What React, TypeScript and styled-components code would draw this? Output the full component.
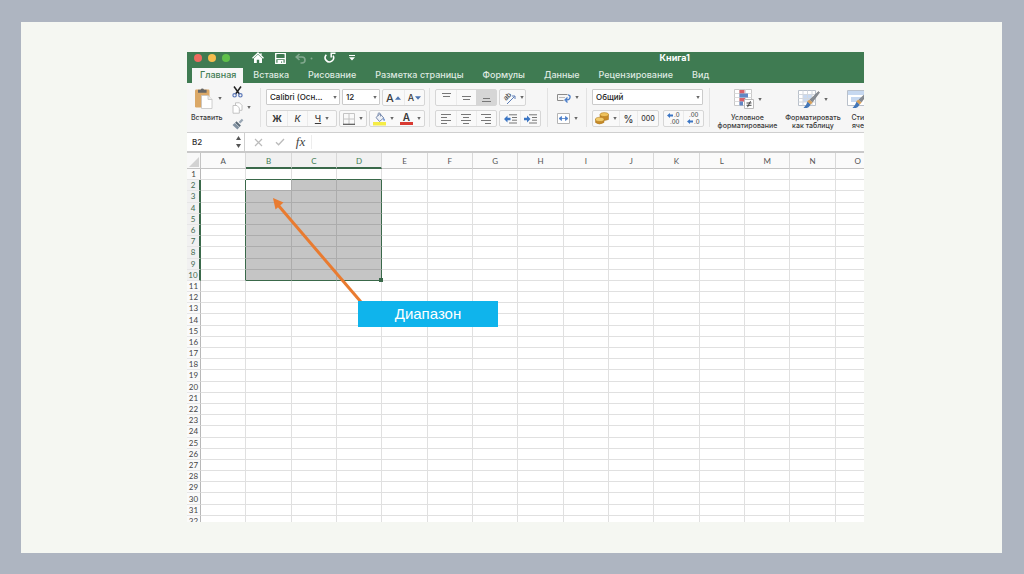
import React from "react";
import styled, { createGlobalStyle, css } from "styled-components";

const GREEN = "#3f7b52";
const OUTLINE = "#3a694a";
const UI_FONT = 'Inter, "Liberation Sans", sans-serif';

const GlobalStyle = createGlobalStyle`
  * { box-sizing: border-box; }
  body { margin: 0; font-family: ${UI_FONT}; }
  button, select, input { font-family: inherit; color: inherit; margin: 0; padding: 0; }
`;

const Page = styled.main`
  display: flex;
  height: 100vh;
  padding: 22px 22px 21px 21px;
  background: #aeb5c1;
`;

const Slide = styled.section`
  display: flex;
  flex: 1;
  min-width: 0;
  padding: 30px 138px 31px 166px;
  background: #f5f7f2;
`;

const Workbook = styled.div`
  display: flex;
  flex: 1;
  flex-direction: column;
  min-width: 0;
  overflow: hidden;
  background: #fff;
`;

const TitleBar = styled.header`
  display: flex;
  flex: none;
  align-items: center;
  height: 15px;
  padding: 0 174px 3px 7px;
  background: ${GREEN};
  color: #fff;
`;

const Lights = styled.div`
  display: flex;
  gap: 6px;
  margin-right: 17px;
`;

const Light = styled.button<{ $color: string }>`
  width: 8px;
  height: 8px;
  border: 0;
  border-radius: 50%;
  background: ${(p) => p.$color};
`;

const QuickButton = styled.button<{ $dim?: boolean; $width?: number }>`
  display: flex;
  align-items: center;
  justify-content: center;
  width: ${(p) => p.$width ?? 22}px;
  height: 12px;
  border: 0;
  background: none;
  opacity: ${(p) => (p.$dim ? 0.35 : 1)};
`;

const BookTitle = styled.h1`
  margin: 0 0 0 auto;
  font-size: 9px;
  line-height: 12px;
  font-weight: 700;
`;

const Tabs = styled.nav`
  display: flex;
  flex: none;
  gap: 1px;
  height: 16px;
  padding: 1px 5px 0;
  background: ${GREEN};
`;

const Tab = styled.a<{ $active?: boolean }>`
  padding: 0 9px;
  font-size: 9px;
  line-height: 13px;
  font-weight: 500;
  white-space: nowrap;
  text-decoration: none;
  color: #dfeae1;
  ${(p) =>
    p.$active &&
    css`
      padding: 0 7px 0 8px;
      background: #f6f6f6;
      color: ${GREEN};
    `}
`;

const Ribbon = styled.div`
  display: flex;
  flex: none;
  height: 50px;
  border-bottom: 1px solid #cfcfcf;
  background: #f6f6f6;
  color: #3a3a3a;
  overflow: hidden;
`;

const Clipboard = styled.div`
  display: flex;
  flex: none;
  width: 73px;
  padding: 2px 0 0 4px;
`;

const Group = styled.div<{ $width?: number }>`
  display: flex;
  flex: ${(p) => (p.$width ? "none" : "1 0 auto")};
  flex-direction: column;
  gap: 4px;
  width: ${(p) => (p.$width ? `${p.$width}px` : "auto")};
  padding: 6px 0 0 6px;
  background: linear-gradient(#e2e2e2, #e2e2e2) no-repeat 0 5px / 1px 39px;
`;

const Line = styled.div<{ $gap?: number }>`
  display: flex;
  gap: ${(p) => p.$gap ?? 2}px;
  height: 17px;
`;

const Cluster = styled.div<{ $plain?: boolean }>`
  display: flex;
  border: 1px solid ${(p) => (p.$plain ? "transparent" : "#d6d6d6")};
  border-radius: 2px;
  background: ${(p) => (p.$plain ? "none" : "#f9f9f9")};
`;

const Tool = styled.button<{ $width: number; $on?: boolean; $size?: number; $divided?: boolean; $tight?: boolean }>`
  display: flex;
  align-items: center;
  justify-content: center;
  gap: ${(p) => (p.$tight ? 1 : 4)}px;
  width: ${(p) => p.$width}px;
  border: 0;
  border-left: ${(p) => (p.$divided ? "1px solid #ebebeb" : "0")};
  background: ${(p) => (p.$on ? "#d6d6d6" : "none")};
  font-size: ${(p) => p.$size ?? 9}px;
  line-height: 12px;
  font-weight: 500;
`;

const Bold = styled.b`
  font-weight: 700;
`;

const SelectBox = styled.div<{ $width: number }>`
  position: relative;
  width: ${(p) => p.$width}px;
  height: 16px;
`;

const Select = styled.select`
  appearance: none;
  display: block;
  width: 100%;
  height: 100%;
  padding: 0 3px;
  border: 1px solid #cbcbcb;
  border-radius: 1px;
  background: #fff;
  color: #222;
  font-size: 8px;
  line-height: 12px;
  font-weight: 500;
`;

const SelectArrow = styled.span`
  position: absolute;
  top: 0;
  right: 3px;
  display: flex;
  align-items: center;
  height: 100%;
  pointer-events: none;
`;

const PasteButton = styled.button`
  display: flex;
  flex-direction: column;
  gap: 4px;
  width: 38px;
  padding-top: 2px;
  border: 0;
  background: none;
  font-size: 7px;
  line-height: 9px;
  font-weight: 500;
  text-align: left;
`;

const PasteFace = styled.span`
  display: flex;
  align-items: center;
  gap: 5px;
  padding-left: 3px;
`;

const ClipTools = styled.div`
  display: flex;
  flex-direction: column;
  gap: 3px;
  padding-left: 3px;
`;

const ClipButton = styled.button`
  display: flex;
  align-items: center;
  gap: 4px;
  height: 13px;
  border: 0;
  background: none;
`;

const StyleButtons = styled.div`
  display: flex;
  gap: 4px;
`;

const StyleButton = styled.button<{ $width: number }>`
  display: flex;
  flex-direction: column;
  align-items: center;
  gap: 5px;
  width: ${(p) => p.$width}px;
  border: 0;
  background: none;
  font-size: 7px;
  line-height: 8px;
  font-weight: 500;
  white-space: nowrap;
`;

const StyleFace = styled.span`
  display: flex;
  align-items: center;
  gap: 4px;
`;

const FormulaBar = styled.div`
  display: flex;
  flex: none;
  align-items: center;
  height: 20px;
  border-bottom: 2px solid #c9c9c9;
  background: #fff;
`;

const NameBox = styled.div`
  display: flex;
  align-items: center;
  width: 58px;
  height: 18px;
  padding: 0 3px 0 5px;
  border-right: 1px solid #cfcfcf;
`;

const NameInput = styled.input`
  flex: 1;
  min-width: 0;
  border: 0;
  background: none;
  font-size: 8px;
  line-height: 12px;
  font-weight: 500;
  color: #333;
`;

const BarTools = styled.div`
  display: flex;
  align-items: center;
  padding-left: 3px;
`;

const BarButton = styled.button`
  display: flex;
  align-items: center;
  justify-content: center;
  width: 21px;
  height: 16px;
  border: 0;
  background: none;
  color: #444;
  font: italic 13px/16px "Liberation Serif", serif;
`;

const FormulaInput = styled.input`
  flex: 1;
  min-width: 0;
  height: 14px;
  border: 0;
  border-left: 1px solid #ededed;
  background: none;
  font-size: 8px;
`;

const SheetArea = styled.div`
  position: relative;
  flex: 1;
  min-height: 0;
  overflow: hidden;
`;

const Sheet = styled.table`
  table-layout: fixed;
  width: calc(100% + 17px);
  height: 374px;
  border-spacing: 0;
  font-family: Lato, "Liberation Sans", sans-serif;
  font-size: 8px;
  line-height: 9px;
`;

const Corner = styled.td`
  width: 14px;
  height: 16px;
  padding: 0;
  border-right: 1px solid #c4c4c4;
  border-bottom: 1px solid #c4c4c4;
  background: #f8f8f8;

  svg { display: block; margin: 2px 0 0 2px; }
`;

const ColumnHead = styled.th<{ $picked: boolean }>`
  height: 16px;
  padding: 2px 0 0;
  border-right: 1px solid #d8d8d8;
  border-bottom: ${(p) => (p.$picked ? `2px solid ${OUTLINE}` : "1px solid #c4c4c4")};
  background: ${(p) => (p.$picked ? "#f1f1f1" : "#fafafa")};
  color: ${(p) => (p.$picked ? GREEN : "#555")};
  font-weight: 400;
`;

const RowHead = styled.th<{ $picked: boolean }>`
  padding: 1px 0 0;
  border-right: ${(p) => (p.$picked ? `2px solid ${OUTLINE}` : "1px solid #b8b8b8")};
  border-bottom: 1px solid #e6e6e6;
  background: ${(p) => (p.$picked ? "#f1f1f1" : "#fafafa")};
  color: ${(p) => (p.$picked ? "#42694f" : "#444")};
  font-weight: 400;
`;

const Cell = styled.td<{ $fill: string; $right: string; $bottom: string }>`
  position: relative;
  padding: 0;
  border-right: 1px solid ${(p) => p.$right};
  border-bottom: 1px solid ${(p) => p.$bottom};
  background: ${(p) => p.$fill};
`;

const FillHandle = styled.span`
  position: absolute;
  z-index: 1;
  right: -2px;
  bottom: -2px;
  width: 4px;
  height: 4px;
  background: ${OUTLINE};
`;

const Arrow = styled.svg`
  position: absolute;
  left: 80px;
  top: 40px;
`;

const Callout = styled.div`
  position: absolute;
  left: 171px;
  top: 148px;
  width: 140px;
  background: #0fb4ec;
  color: #fff;
  font: 15px/26px "Liberation Sans", sans-serif;
  text-align: center;
`;

const Caret = () => (
  <svg width="4" height="3" viewBox="0 0 4 3"><path d="M.3 0h3.400L2 3z" fill="#666" /></svg>
);

const HomeIcon = () => (
  <svg width="12" height="12" viewBox="0 0 12 12">
    <path d="M.5 6.2 6 1l5.5 5.2M9 1.3v2.4" fill="none" stroke="#fff" strokeWidth="1.3" />
    <path d="M2 6.2 6 2.6l4 3.6V11H7.2V7.8H4.8V11H2z" fill="#fff" />
  </svg>
);

const SaveIcon = () => (
  <svg width="11" height="11" viewBox="0 0 11 11">
    <path d="M.7.7h9.6v9.6H.7z" fill="none" stroke="#fff" strokeWidth="1.3" />
    <path d="M2.2 1h6.6v3.8H2.2z" fill={GREEN} />
    <path d="M1 5h9v1.2H1zM2.5 7h6v3.5h-1.400V8.4H6v2.1H2.500z" fill="#fff" />
  </svg>
);

const UndoIcon = () => (
  <svg width="18" height="11" viewBox="0 0 18 11">
    <path d="M4.5 1 1.2 4l3.3 3M1.5 4H7a3 3 0 0 1 0 6H5.5" fill="none" stroke="#fff" strokeWidth="1.6" />
    <circle cx="16.5" cy="5.5" r="1" fill="#fff" />
  </svg>
);

const RedoIcon = () => (
  <svg width="12" height="12" viewBox="0 0 12 12">
    <path d="M2.3 2.8a4.2 4.2 0 1 0 6.800.9" fill="none" stroke="#fff" strokeWidth="1.6" />
    <path d="M11.500 1.200H7.200v4.300" fill="none" stroke="#fff" strokeWidth="1.5" />
  </svg>
);

const MoreIcon = () => (
  <svg width="6" height="6" viewBox="0 0 6 6"><path d="M0 0h6v1H0zM0 2.2h6L3 5.6z" fill="#fff" /></svg>
);

const PasteIcon = () => (
  <svg width="19" height="22" viewBox="0 0 19 22">
    <rect x="1" y="2.5" width="14.5" height="18" rx="1.2" fill="#dba867" />
    <path d="M4 2.8h2.6a1.8 1.8 0 0 1 3.4 0h2.6v3H4z" fill="#666" />
    <path d="M7.5 8.5H14l4 4v9H7.5z" fill="#fff" stroke="#c4c4c4" strokeWidth=".8" />
    <path d="M14 8.5v4h4" fill="#eee" stroke="#c4c4c4" strokeWidth=".8" />
  </svg>
);

const CutIcon = () => (
  <svg width="11" height="12" viewBox="0 0 11 12">
    <path d="M2 .5 7.4 8M9 .5 3.6 8" stroke="#222" strokeWidth="1.5" fill="none" />
    <circle cx="2.6" cy="9.3" r="1.7" fill="none" stroke="#5c78b8" strokeWidth="1.2" />
    <circle cx="8.4" cy="9.3" r="1.7" fill="none" stroke="#5c78b8" strokeWidth="1.2" />
  </svg>
);

const CopyIcon = () => (
  <svg width="11" height="12" viewBox="0 0 11 12" fill="#fff" stroke="#bdbdbd" strokeWidth=".9">
    <path d="M3.5.8h4l2.5 2.5v5H3.5z" />
    <path d="M1 3.5h4L7.3 6v5.2H1z" />
  </svg>
);

const BrushIcon = () => (
  <svg width="12" height="12" viewBox="0 0 12 12">
    <path d="M6.6 4 9.8.7l1.6 1.5L8.3 5.6z" fill="#9aa7b4" />
    <path d="m4.5 3.3 4.4 4.3-1.3 1.3-4.5-4.2z" fill="#596875" />
    <path d="m2.8 5 4.5 4.2L5.4 11.5.5 7z" fill="#8292a2" />
  </svg>
);

const SizeArrow = ({ up }: { up?: boolean }) => (
  <svg width="6" height="4" viewBox="0 0 6 4"><path d={up ? "M0 3.800h6L3 .2z" : "M0 .2h6L3 3.800z"} fill="#4a73b0" /></svg>
);

const BordersIcon = () => (
  <svg width="12" height="12" viewBox="0 0 12 12">
    <path d="M.5.5h11v11M.5.5v11M6 .5v11M.5 6h11" fill="none" stroke="#c4c4c4" />
    <path d="M0 11.3h12" stroke="#555" strokeWidth="1.2" />
  </svg>
);

const FillIcon = () => (
  <svg width="13" height="14" viewBox="0 0 13 14">
    <path d="m3 5.5 4-3.8 3.7 4.2L6.5 9.5z" fill="#eef1f6" stroke="#6b7fa5" strokeWidth=".9" />
    <path d="M5 4V1.5Q6.5-.3 7.5 2v2.5" fill="none" stroke="#6b7fa5" strokeWidth=".8" />
    <path d="M10.5 5.5q2 2 .9 3.5-1.4 0-.9-3.5" fill="#3f6fc0" />
    <path d="M0 10h13v3.5H0z" fill="#f5ec45" />
  </svg>
);

const ColorBar = styled.span`
  display: block;
  width: 13px;
  border-bottom: 3px solid #d93a32;
  font-size: 10px;
  line-height: 10px;
  font-weight: 600;
`;

const Strokes = ({ d }: { d: string }) => (
  <svg width="11" height="11" viewBox="0 0 11 11"><path d={d} stroke="#777" strokeWidth="1" fill="none" /></svg>
);

const OrientIcon = () => (
  <svg width="14" height="14" viewBox="0 0 14 14">
    <text transform="translate(4 10) rotate(-45)" fontSize="7" fontFamily="Inter, sans-serif" fill="#444">ab</text>
    <path d="m5 13 7.500-7.500M13 5v3M13 5h-3" stroke="#5f7fb8" fill="none" />
  </svg>
);

const IndentIcon = ({ out }: { out?: boolean }) => (
  <svg width="13" height="10" viewBox="0 0 13 10">
    <path d="M5 .8h8M8 3.5h5M8 6.2h5M5 9h8" stroke="#777" />
    <path d={out ? "M0 5 3.5 1.6v2.2h3v2.4h-3v2.2z" : "M6.5 5 3 1.6v2.2H0v2.4h3v2.2z"} fill="#3c76c4" />
  </svg>
);

const WrapIcon = () => (
  <svg width="14" height="10" viewBox="0 0 14 10">
    <path d="M.5 1.5h10M.5 1.500v6h6" stroke="#8a8a8a" fill="none" />
    <path d="M2 4.5h6" stroke="#bbb" />
    <path d="M11 1.800q2.5.5 2 2.8-.5 2.400-4 2.400M10.5 4.500 8 7l2.5 2.5" stroke="#4a7dc9" strokeWidth="1.3" fill="none" />
  </svg>
);

const MergeIcon = () => (
  <svg width="13" height="11" viewBox="0 0 13 11">
    <path d="M.5.5h12v10H.5z" fill="#fff" stroke="#b4b4b4" />
    <path d="M2 5.5 4.5 3.500v4zM11 5.5 8.5 3.500v4zM4 5.5h5" fill="#4a7dc9" stroke="#4a7dc9" strokeWidth=".8" />
  </svg>
);

const CoinsIcon = () => (
  <svg width="14" height="13" viewBox="0 0 14 13" stroke="#a8741c" strokeWidth=".5">
    <path d="M5 2.5v5q4 2 8.5 0v-5z" fill="#c98b28" />
    <ellipse cx="9.3" cy="2.6" rx="4.3" ry="2" fill="#f0c35c" />
    <path d="M.5 7v3.5q3.5 3 8.5 0V7z" fill="#c98b28" />
    <ellipse cx="4.8" cy="7.4" rx="4.3" ry="2.1" fill="#f3cb6a" />
  </svg>
);

const DecimalIcon = ({ less }: { less?: boolean }) => (
  <svg width="13" height="13" viewBox="0 0 13 13" fontFamily="Inter, sans-serif" fontSize="6" fontWeight="500" fill="#555">
    <text x={less ? 2 : 7} y="5">{less ? ".00" : ".0"}</text>
    <text x={less ? 7 : 3} y="12">{less ? ".0" : ".00"}</text>
    <path d={less ? "M0 9.5 3 7v1.5h3v2H3V12z" : "M0 3.5 3 1v1.5h3v2H3V6z"} fill="#3c76c4" />
  </svg>
);

const CondIcon = () => (
  <svg width="20" height="20" viewBox="0 0 20 20">
    <path d="M.5.5h17v16H.5z" fill="#fff" stroke="#c9c9c9" />
    <path d="M.5 4.5h17M.5 8.5h17M.5 12.5h17M5.5.5v16M11.5.5v16" stroke="#dadada" fill="none" />
    <path d="M5.5 1h5v3.500h-5zM5.5 9h5.5v3.5H5.5z" fill="#d9606a" />
    <path d="M5.5 4.5H14v4H5.5zM5.5 12.5H9v4H5.5z" fill="#6287c5" />
    <path d="M10.5 10.5h9v9h-9z" fill="#fff" stroke="#bbb" />
    <path d="M12.5 14h5M12.5 16.3h5M16.5 12.2l-3 6" stroke="#444" />
  </svg>
);

const TableBrushIcon = ({ sheet }: { sheet?: boolean }) => (
  <svg width="22" height="20" viewBox="0 0 22 20">
    <path d="M.5 1.5h17v15H.5z" fill="#fff" stroke="#b9c0ca" />
    {sheet ? (
      <path d="M1 2h16v4H1zM4 8h10v5H4z" fill="#c6d8f0" />
    ) : (
      <>
        <path d="M5 5.5h9v7.500H5z" fill="#c9daf2" />
        <path d="M.5 5.5h17M.5 9.5h17M.5 13h17M5 1.5v15M9.5 1.5v15M14 1.5v15" stroke="#d3d8df" fill="none" />
      </>
    )}
    <path d="m20.5 2.5 1 1-7 9.500-2.500-2.300z" fill="#858b93" stroke="#666" strokeWidth=".5" />
    <path d="m11.300 10.500 3.300 3-2 2.300-3.500-3z" fill="#d8a15a" />
    <path d="M9.500 12.700 12.500 15.400q-1.500 4.300-7 3.600 2.500-2 4-6.300" fill="#4477b8" />
  </svg>
);

const tabs = ["Главная", "Вставка", "Рисование", "Разметка страницы", "Формулы", "Данные", "Рецензирование", "Вид"];
const columns = "ABCDEFGHIJKLMNO".split("");
const rows = Array.from({ length: 32 }, (_, i) => i + 1);
const inColumns = (c: number) => c >= 1 && c <= 3;
const inRows = (r: number) => r >= 2 && r <= 10;

function cellLook(c: number, r: number) {
  const picked = inColumns(c) && inRows(r);
  const line = picked ? "#acacac" : "#e0e0e0";
  return {
    $fill: picked && !(c === 1 && r === 2) ? "#c5c5c5" : "#fff",
    $right: inRows(r) && (c === 0 || c === 3) ? OUTLINE : line,
    $bottom: inColumns(c) && (r === 1 || r === 10) ? OUTLINE : line,
  };
}

const Dropdown = ({ label, value, width }: { label: string; value: string; width: number }) => (
  <SelectBox $width={width}>
    <Select aria-label={label} defaultValue={value}><option>{value}</option></Select>
    <SelectArrow><Caret /></SelectArrow>
  </SelectBox>
);

export default function App() {
  return (
    <Page>
      <GlobalStyle />
      <Slide>
        <Workbook>
          <TitleBar>
            <Lights>
              <Light $color="#ee6a5f" aria-label="Закрыть" />
              <Light $color="#f5bd4f" aria-label="Свернуть" />
              <Light $color="#5fc04a" aria-label="Развернуть" />
            </Lights>
            <QuickButton aria-label="Домой"><HomeIcon /></QuickButton>
            <QuickButton aria-label="Сохранить"><SaveIcon /></QuickButton>
            <QuickButton $dim $width={26} aria-label="Отменить"><UndoIcon /></QuickButton>
            <QuickButton $width={26} aria-label="Повторить"><RedoIcon /></QuickButton>
            <QuickButton $width={18} aria-label="Настроить панель"><MoreIcon /></QuickButton>
            <BookTitle>Книга1</BookTitle>
          </TitleBar>
          <Tabs>
            {tabs.map((t, i) => <Tab key={t} href="#" $active={i === 0}>{t}</Tab>)}
          </Tabs>
          <Ribbon>
            <Clipboard>
              <PasteButton>
                <PasteFace><PasteIcon /><Caret /></PasteFace>
                Вставить
              </PasteButton>
              <ClipTools>
                <ClipButton aria-label="Вырезать"><CutIcon /></ClipButton>
                <ClipButton aria-label="Копировать"><CopyIcon /><Caret /></ClipButton>
                <ClipButton aria-label="Формат по образцу"><BrushIcon /></ClipButton>
              </ClipTools>
            </Clipboard>
            <Group $width={169}>
              <Line>
                <Dropdown label="Шрифт" value="Calibri (Осн..." width={74} />
                <Dropdown label="Размер шрифта" value="12" width={38} />
                <Cluster>
                  <Tool $width={21} $size={11} $tight aria-label="Увеличить шрифт">A<SizeArrow up /></Tool>
                  <Tool $width={20} $size={9} $tight $divided aria-label="Уменьшить шрифт">A<SizeArrow /></Tool>
                </Cluster>
              </Line>
              <Line>
                <Cluster>
                  <Tool $width={20}><Bold>Ж</Bold></Tool>
                  <Tool $width={20} $divided><i>К</i></Tool>
                  <Tool $width={29} $divided><u>Ч</u><Caret /></Tool>
                </Cluster>
                <Cluster><Tool $width={26} aria-label="Границы"><BordersIcon /><Caret /></Tool></Cluster>
                <Cluster>
                  <Tool $width={27} aria-label="Цвет заливки"><FillIcon /><Caret /></Tool>
                  <Tool $width={27}><ColorBar>A</ColorBar><Caret /></Tool>
                </Cluster>
              </Line>
            </Group>
            <Group $width={118}>
              <Line>
                <Cluster>
                  <Tool $width={20} aria-label="По верхнему краю"><Strokes d="M1 1.5h9M2 4.5h7" /></Tool>
                  <Tool $width={20} $divided aria-label="Посередине"><Strokes d="M1 4.5h9M2 7.5h7" /></Tool>
                  <Tool $width={20} $on aria-label="По нижнему краю"><Strokes d="M2 6.5h7M1 9.5h9" /></Tool>
                </Cluster>
                <Cluster><Tool $width={25} aria-label="Ориентация"><OrientIcon /><Caret /></Tool></Cluster>
              </Line>
              <Line>
                <Cluster>
                  <Tool $width={20} aria-label="По левому краю"><Strokes d="M0 1.5h10M0 4.5h6M0 7.5h10M0 10.5h6" /></Tool>
                  <Tool $width={20} $divided aria-label="По центру"><Strokes d="M0 1.5h10M2 4.5h6M0 7.5h10M2 10.5h6" /></Tool>
                  <Tool $width={20} $divided aria-label="По правому краю"><Strokes d="M0 1.5h10M4 4.5h6M0 7.5h10M4 10.5h6" /></Tool>
                </Cluster>
                <Cluster>
                  <Tool $width={20} aria-label="Уменьшить отступ"><IndentIcon out /></Tool>
                  <Tool $width={20} $divided aria-label="Увеличить отступ"><IndentIcon /></Tool>
                </Cluster>
              </Line>
            </Group>
            <Group $width={39}>
              <Line><Cluster $plain><Tool $width={27} aria-label="Перенос текста"><WrapIcon /><Caret /></Tool></Cluster></Line>
              <Line><Cluster $plain><Tool $width={27} aria-label="Объединить ячейки"><MergeIcon /><Caret /></Tool></Cluster></Line>
            </Group>
            <Group $width={123}>
              <Line><Dropdown label="Числовой формат" value="Общий" width={111} /></Line>
              <Line $gap={4}>
                <Cluster>
                  <Tool $width={26} aria-label="Денежный формат"><CoinsIcon /><Caret /></Tool>
                  <Tool $width={18} $size={10} $divided>%</Tool>
                  <Tool $width={21} $size={7} $divided>000</Tool>
                </Cluster>
                <Cluster>
                  <Tool $width={19} aria-label="Увеличить разрядность"><DecimalIcon /></Tool>
                  <Tool $width={20} $divided aria-label="Уменьшить разрядность"><DecimalIcon less /></Tool>
                </Cluster>
              </Line>
            </Group>
            <Group>
              <StyleButtons>
                <StyleButton $width={65}>
                  <StyleFace><CondIcon /><Caret /></StyleFace>
                  <span>Условное<br />форматирование</span>
                </StyleButton>
                <StyleButton $width={58}>
                  <StyleFace><TableBrushIcon /><Caret /></StyleFace>
                  <span>Форматировать<br />как таблицу</span>
                </StyleButton>
                <StyleButton $width={32}>
                  <StyleFace><TableBrushIcon sheet /><Caret /></StyleFace>
                  <span>Стили<br />ячеек</span>
                </StyleButton>
              </StyleButtons>
            </Group>
          </Ribbon>
          <FormulaBar>
            <NameBox>
              <NameInput aria-label="Имя ячейки" defaultValue="B2" />
              <svg width="5" height="12" viewBox="0 0 5 12"><path d="M0 4h5L2.5 0zM0 8h5l-2.5 4z" fill="#555" /></svg>
            </NameBox>
            <BarTools>
              <BarButton aria-label="Отмена">
                <svg width="9" height="9" viewBox="0 0 9 9"><path d="m1 1 7 7M8 1 1 8" stroke="#bbb" strokeWidth="1.2" /></svg>
              </BarButton>
              <BarButton aria-label="Ввод">
                <svg width="10" height="8" viewBox="0 0 10 8"><path d="m1 4.2 2.6 2.6L9 1" fill="none" stroke="#bbb" strokeWidth="1.3" /></svg>
              </BarButton>
              <BarButton>fx</BarButton>
            </BarTools>
            <FormulaInput aria-label="Строка формул" />
          </FormulaBar>
          <SheetArea>
            <Sheet>
              <thead>
                <tr>
                  <Corner><svg width="10" height="10" viewBox="0 0 10 10"><path d="M10 0v10H0z" fill="#d2d2d2" /></svg></Corner>
                  {columns.map((c, i) => <ColumnHead key={c} scope="col" $picked={inColumns(i)}>{c}</ColumnHead>)}
                </tr>
              </thead>
              <tbody>
                {rows.map((r) => (
                  <tr key={r}>
                    <RowHead scope="row" $picked={inRows(r)}>{r}</RowHead>
                    {columns.map((c, i) => (
                      <Cell key={c} {...cellLook(i, r)}>{i === 3 && r === 10 && <FillHandle />}</Cell>
                    ))}
                  </tr>
                ))}
              </tbody>
            </Sheet>
            <Arrow width="100" height="112" viewBox="0 0 100 112">
              <path d="M11 12 94 109" stroke="#e97b30" strokeWidth="3" />
              <path d="m6 5 10.500 4.500-8 7z" fill="#e97b30" />
            </Arrow>
            <Callout>Диапазон</Callout>
          </SheetArea>
        </Workbook>
      </Slide>
    </Page>
  );
}
